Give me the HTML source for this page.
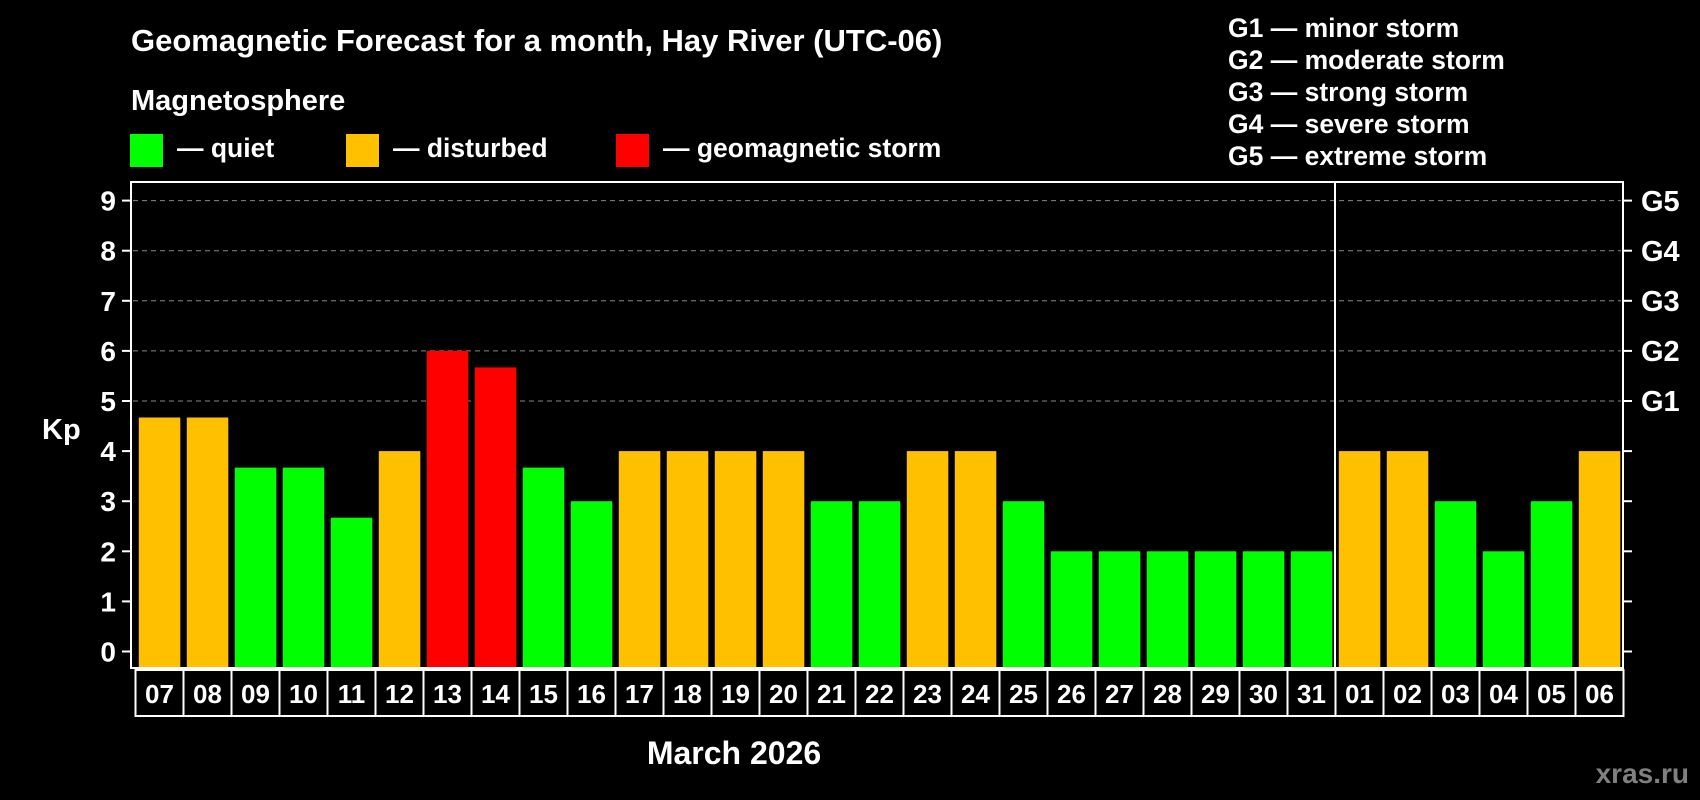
<!DOCTYPE html>
<html><head><meta charset="utf-8"><style>
html,body{margin:0;padding:0;background:#000;}
svg{display:block;font-family:"Liberation Sans",Arial,sans-serif;font-weight:bold;}
</style></head><body>
<svg width="1700" height="800" viewBox="0 0 1700 800" xmlns="http://www.w3.org/2000/svg">
<rect width="1700" height="800" fill="#000"/>
<g fill="#fff">
<text x="131" y="51" font-size="31">Geomagnetic Forecast for a month, Hay River (UTC-06)</text>
<text x="131" y="110" font-size="29">Magnetosphere</text>
<text x="177" y="157" font-size="26.5">— quiet</text>
<text x="393" y="157" font-size="26.5">— disturbed</text>
<text x="663" y="157" font-size="26.5">— geomagnetic storm</text>
<g font-size="26.5">
<text x="1228" y="37">G1 — minor storm</text>
<text x="1228" y="69">G2 — moderate storm</text>
<text x="1228" y="101">G3 — strong storm</text>
<text x="1228" y="133">G4 — severe storm</text>
<text x="1228" y="165">G5 — extreme storm</text>
</g>
</g>
<rect x="130" y="134" width="33" height="33" fill="#00ff00"/>
<rect x="346" y="134" width="33" height="33" fill="#ffc000"/>
<rect x="616" y="134" width="33" height="33" fill="#ff0000"/>

<g stroke="#888" stroke-width="1" stroke-dasharray="5,4">
<line x1="133" x2="1621" y1="200.6" y2="200.6"/>
<line x1="133" x2="1621" y1="250.7" y2="250.7"/>
<line x1="133" x2="1621" y1="300.8" y2="300.8"/>
<line x1="133" x2="1621" y1="350.9" y2="350.9"/>
<line x1="133" x2="1621" y1="401" y2="401"/>
</g>

<g>
<rect x="138.8" y="417.5" width="41.5" height="249.5" fill="#ffc000"/>
<rect x="186.8" y="417.5" width="41.5" height="249.5" fill="#ffc000"/>
<rect x="234.8" y="467.6" width="41.5" height="199.4" fill="#00ff00"/>
<rect x="282.8" y="467.6" width="41.5" height="199.4" fill="#00ff00"/>
<rect x="330.8" y="517.7" width="41.5" height="149.3" fill="#00ff00"/>
<rect x="378.8" y="451.1" width="41.5" height="215.9" fill="#ffc000"/>
<rect x="426.8" y="350.9" width="41.5" height="316.1" fill="#ff0000"/>
<rect x="474.8" y="367.4" width="41.5" height="299.6" fill="#ff0000"/>
<rect x="522.8" y="467.6" width="41.5" height="199.4" fill="#00ff00"/>
<rect x="570.8" y="501.2" width="41.5" height="165.8" fill="#00ff00"/>
<rect x="618.8" y="451.1" width="41.5" height="215.9" fill="#ffc000"/>
<rect x="666.8" y="451.1" width="41.5" height="215.9" fill="#ffc000"/>
<rect x="714.8" y="451.1" width="41.5" height="215.9" fill="#ffc000"/>
<rect x="762.8" y="451.1" width="41.5" height="215.9" fill="#ffc000"/>
<rect x="810.8" y="501.2" width="41.5" height="165.8" fill="#00ff00"/>
<rect x="858.8" y="501.2" width="41.5" height="165.8" fill="#00ff00"/>
<rect x="906.8" y="451.1" width="41.5" height="215.9" fill="#ffc000"/>
<rect x="954.8" y="451.1" width="41.5" height="215.9" fill="#ffc000"/>
<rect x="1002.8" y="501.2" width="41.5" height="165.8" fill="#00ff00"/>
<rect x="1050.8" y="551.3" width="41.5" height="115.7" fill="#00ff00"/>
<rect x="1098.8" y="551.3" width="41.5" height="115.7" fill="#00ff00"/>
<rect x="1146.8" y="551.3" width="41.5" height="115.7" fill="#00ff00"/>
<rect x="1194.8" y="551.3" width="41.5" height="115.7" fill="#00ff00"/>
<rect x="1242.8" y="551.3" width="41.5" height="115.7" fill="#00ff00"/>
<rect x="1290.8" y="551.3" width="41.5" height="115.7" fill="#00ff00"/>
<rect x="1338.8" y="451.1" width="41.5" height="215.9" fill="#ffc000"/>
<rect x="1386.8" y="451.1" width="41.5" height="215.9" fill="#ffc000"/>
<rect x="1434.8" y="501.2" width="41.5" height="165.8" fill="#00ff00"/>
<rect x="1482.8" y="551.3" width="41.5" height="115.7" fill="#00ff00"/>
<rect x="1530.8" y="501.2" width="41.5" height="165.8" fill="#00ff00"/>
<rect x="1578.8" y="451.1" width="41.5" height="215.9" fill="#ffc000"/>
</g>

<rect x="131" y="182" width="1492" height="486" fill="none" stroke="#fff" stroke-width="2"/>
<g stroke="#fff" stroke-width="2">
<line x1="122" x2="131" y1="200.6" y2="200.6"/><line x1="122" x2="131" y1="250.7" y2="250.7"/>
<line x1="122" x2="131" y1="300.8" y2="300.8"/><line x1="122" x2="131" y1="350.9" y2="350.9"/>
<line x1="122" x2="131" y1="401" y2="401"/><line x1="122" x2="131" y1="451.1" y2="451.1"/>
<line x1="122" x2="131" y1="501.2" y2="501.2"/><line x1="122" x2="131" y1="551.3" y2="551.3"/>
<line x1="122" x2="131" y1="601.4" y2="601.4"/><line x1="122" x2="131" y1="651.5" y2="651.5"/>
<line x1="1623" x2="1632" y1="200.6" y2="200.6"/><line x1="1623" x2="1632" y1="250.7" y2="250.7"/>
<line x1="1623" x2="1632" y1="300.8" y2="300.8"/><line x1="1623" x2="1632" y1="350.9" y2="350.9"/>
<line x1="1623" x2="1632" y1="401" y2="401"/><line x1="1623" x2="1632" y1="451.1" y2="451.1"/>
<line x1="1623" x2="1632" y1="501.2" y2="501.2"/><line x1="1623" x2="1632" y1="551.3" y2="551.3"/>
<line x1="1623" x2="1632" y1="601.4" y2="601.4"/><line x1="1623" x2="1632" y1="651.5" y2="651.5"/>
<line x1="1335" x2="1335" y1="182" y2="668"/>
</g>
<g fill="#fff" font-size="28" text-anchor="end">
<text x="116" y="210.6">9</text><text x="116" y="260.7">8</text><text x="116" y="310.8">7</text>
<text x="116" y="360.9">6</text><text x="116" y="411">5</text><text x="116" y="461.1">4</text>
<text x="116" y="511.2">3</text><text x="116" y="561.3">2</text><text x="116" y="611.4">1</text>
<text x="116" y="661.5">0</text>
</g>
<text x="42" y="439" fill="#fff" font-size="29">Kp</text>
<g fill="#fff" font-size="29">
<text x="1641" y="211">G5</text><text x="1641" y="261">G4</text><text x="1641" y="311">G3</text>
<text x="1641" y="361">G2</text><text x="1641" y="411">G1</text>
</g>

<g stroke="#fff" stroke-width="2" fill="none">
<rect x="135.5" y="670" width="1488" height="46"/>
<path d="M183.5 670V716M231.5 670V716M279.5 670V716M327.5 670V716M375.5 670V716M423.5 670V716M471.5 670V716M519.5 670V716M567.5 670V716M615.5 670V716M663.5 670V716M711.5 670V716M759.5 670V716M807.5 670V716M855.5 670V716M903.5 670V716M951.5 670V716M999.5 670V716M1047.5 670V716M1095.5 670V716M1143.5 670V716M1191.5 670V716M1239.5 670V716M1287.5 670V716M1335.5 670V716M1383.5 670V716M1431.5 670V716M1479.5 670V716M1527.5 670V716M1575.5 670V716"/>
</g>
<g fill="#fff" font-size="26" text-anchor="middle">
<text x="159.5" y="703">07</text><text x="207.5" y="703">08</text><text x="255.5" y="703">09</text>
<text x="303.5" y="703">10</text><text x="351.5" y="703">11</text><text x="399.5" y="703">12</text>
<text x="447.5" y="703">13</text><text x="495.5" y="703">14</text><text x="543.5" y="703">15</text>
<text x="591.5" y="703">16</text><text x="639.5" y="703">17</text><text x="687.5" y="703">18</text>
<text x="735.5" y="703">19</text><text x="783.5" y="703">20</text><text x="831.5" y="703">21</text>
<text x="879.5" y="703">22</text><text x="927.5" y="703">23</text><text x="975.5" y="703">24</text>
<text x="1023.5" y="703">25</text><text x="1071.5" y="703">26</text><text x="1119.5" y="703">27</text>
<text x="1167.5" y="703">28</text><text x="1215.5" y="703">29</text><text x="1263.5" y="703">30</text>
<text x="1311.5" y="703">31</text><text x="1359.5" y="703">01</text><text x="1407.5" y="703">02</text>
<text x="1455.5" y="703">03</text><text x="1503.5" y="703">04</text><text x="1551.5" y="703">05</text>
<text x="1599.5" y="703">06</text>
</g>
<text x="734" y="764" fill="#fff" font-size="32" text-anchor="middle">March 2026</text>
<text x="1689" y="783" fill="#808080" font-size="28" text-anchor="end">xras.ru</text>
</svg>
</body></html>
